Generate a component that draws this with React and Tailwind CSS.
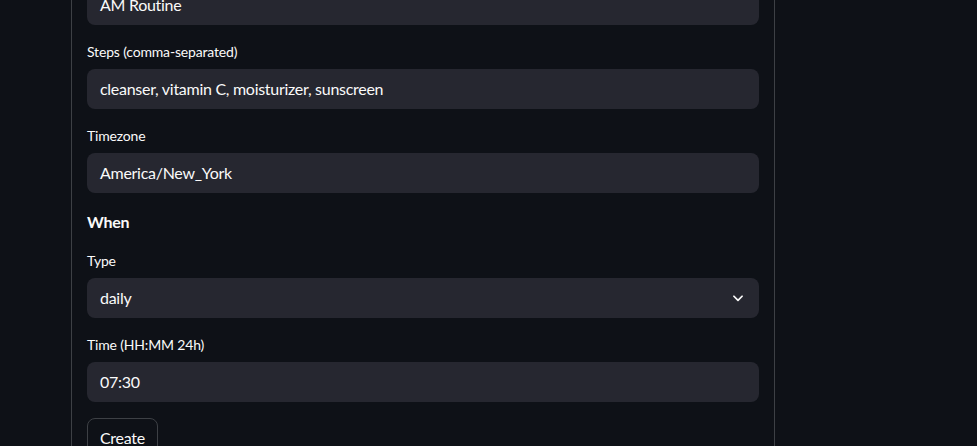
import React from "react";

const Field = ({ label, value }) => (
  <div>
    <div className="h-[21px] leading-[21px] mb-[7px] text-[14px] tracking-[-0.17px] text-[#fafafa]">{label}</div>
    <div className="h-10 rounded-lg bg-[#262730] px-[13px] flex items-center text-[16px] tracking-[-0.28px] text-[#fafafa]">
      {value}
    </div>
  </div>
);

const App = () => {
  return (
    <div className="w-[977px] h-[446px] overflow-hidden bg-[#0e1117] font-['Lato',sans-serif]">
      <div className="ml-[71px] w-[704px] border-x border-[#3d4045] px-[15px] h-full flex flex-col">
        <div className="-mt-[15px] flex flex-col gap-4">
          <div className="h-10 rounded-lg bg-[#262730] px-[13px] flex items-center text-[16px] tracking-[-0.28px] text-[#fafafa]">
            AM Routine
          </div>
          <Field label="Steps (comma-separated)" value="cleanser, vitamin C, moisturizer, sunscreen" />
          <Field label="Timezone" value="America/New_York" />
          <div className="h-[25px] leading-[25px] text-[16px] font-bold tracking-[-0.28px] text-[#fafafa]">When</div>
          <div>
            <div className="h-[21px] leading-[21px] mb-[7px] text-[14px] tracking-[-0.17px] text-[#fafafa]">Type</div>
            <div className="h-10 rounded-lg bg-[#262730] pl-[13px] pr-[14px] flex items-center justify-between text-[16px] tracking-[-0.28px] text-[#fafafa]">
              <span>daily</span>
              <svg width="14" height="14" viewBox="0 0 24 24" fill="none" stroke="#fafafa" strokeWidth="3" strokeLinecap="round" strokeLinejoin="round">
                <path d="M5 9l7 7 7-7" />
              </svg>
            </div>
          </div>
          <Field label="Time (HH:MM 24h)" value="07:30" />
          <div>
            <button className="h-10 px-3 rounded-lg border border-[#3d4045] bg-[#0e1117] text-[16px] tracking-[-0.28px] text-[#fafafa]">
              Create
            </button>
          </div>
        </div>
      </div>
    </div>
  );
};

export default App;
